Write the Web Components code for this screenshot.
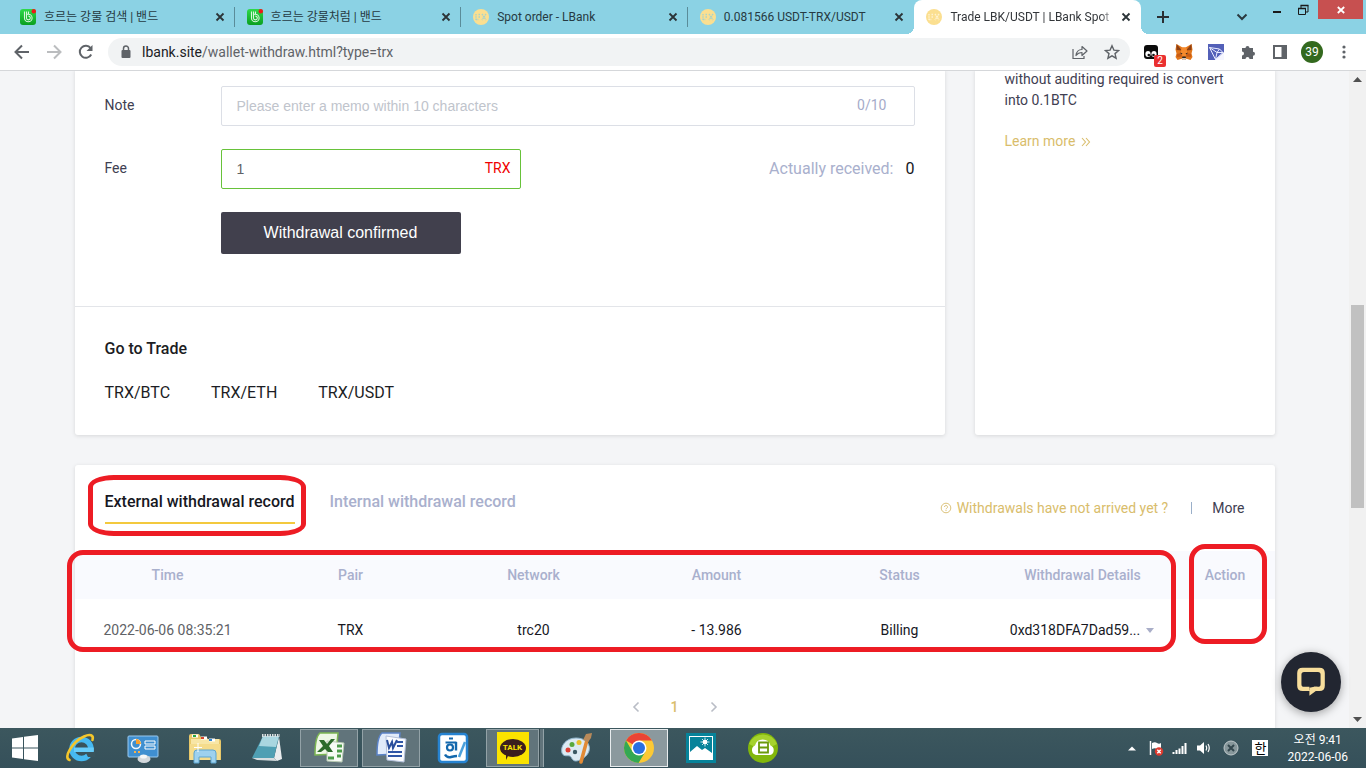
<!DOCTYPE html>
<html lang="en">
<head>
<meta charset="utf-8">
<title>Trade LBK/USDT | LBank Spot Trading</title>
<style>
html, body { margin: 0; height: 100%; }
body { font: 14px/20px Roboto, "Noto Sans CJK KR", sans-serif; overflow: hidden; }
</style>
</head>
<body>
<desktop-screen></desktop-screen>
<script>
const define = (name, html, setup) => {
  const template = document.createElement('template');
  template.innerHTML = html;
  customElements.define(name, class extends HTMLElement {
    constructor() {
      super();
      this.attachShadow({ mode: 'open' }).append(template.content.cloneNode(true));
    }
    connectedCallback() { if (setup) setup(this, this.shadowRoot); }
  });
};

/* ---------- icons ---------- */
const ICONS = {
  band: [16, '<defs><linearGradient id="g" x2="0" y2="1"><stop stop-color="#2fd94a"/><stop offset="1" stop-color="#0a9f1f"/></linearGradient></defs><rect width="16" height="16" rx="3" fill="url(#g)"/><path d="M4.500 2.500V9a3.800 3.800 0 1 0 3.800-3.800H7M6.500 2.500V9a1.900 1.900 0 1 0 1.900-1.900M8.500 2.500V5" fill="none" stroke="#d9f7dc" stroke-width="1.100"/><circle cx="13.800" cy="2.200" r="2.200" fill="#f01818"/>'],
  lbank: [16, '<circle cx="8" cy="8" r="8" fill="#fbdf90"/><path d="M3 5v6M3 10.500h2.500M5.500 5.500h2M5.500 8h2M9 5l4 6M13 5l-4 6" fill="none" stroke="#aad3c9" stroke-width="1.400" stroke-dasharray="1.500 .7"/>'],
  lbanklight: [16, '<circle cx="8" cy="8" r="8" fill="#fbdf90"/><path d="M3 5v6M3 10.500h2.500M5.500 5.500h2M5.500 8h2M9 5l4 6M13 5l-4 6" fill="none" stroke="#fff2cf" stroke-width="1.400" stroke-dasharray="1.500 .7"/>'],
  close: [16, '<path d="M4.500 4.500l7 7M11.500 4.500l-7 7" stroke="#2b3438" stroke-width="1.800"/>'],
  plus: [16, '<path d="M8 2v12M2 8h12" stroke="#2a2f33" stroke-width="2"/>'],
  chevron: [16, '<path d="M3.500 5.500L8 10l4.500-4.500" fill="none" stroke="#2a3a40" stroke-width="2"/>'],
  back: [16, '<path d="M15 8H2M8 1.500L1.500 8 8 14.500" fill="none" stroke="#5f6368" stroke-width="2"/>'],
  forward: [16, '<path d="M1 8h13M8 1.500L14.500 8 8 14.500" fill="none" stroke="#bbbdbf" stroke-width="2"/>'],
  reload: [16, '<path d="M13.200 10.500A6 6 0 1 1 12.600 4.200" fill="none" stroke="#5f6368" stroke-width="2"/><path d="M14.500 1v6h-6z" fill="#5f6368"/>'],
  lock: [16, '<rect x="3.500" y="6" width="9" height="8" rx="1" fill="#5f6368"/><path d="M5.500 6V4.500a2.500 2.500 0 0 1 5 0V6" fill="none" stroke="#5f6368" stroke-width="1.500"/>'],
  share: [16, '<path d="M1 5v9.500h11V12" fill="none" stroke="#5f6368" stroke-width="1.200"/><path d="M4 11.500C4.500 7.500 7 5.500 10 5.500V2.500L15 7l-5 4.500V8.500C7.500 8.500 5.500 9.500 4 11.500z" fill="none" stroke="#5f6368" stroke-width="1.200" stroke-linejoin="round"/>'],
  star: [16, '<path d="M8 1.800l1.900 4.300 4.700.4-3.600 3.100 1.100 4.600L8 11.800l-4.100 2.400L5 9.600 1.400 6.500l4.700-.4z" fill="none" stroke="#5f6368" stroke-width="1.400"/>'],
  octo: [22, '<path d="M3 7q0-3 3-3h8q3 0 3 3v11H6q-3 0-3-3z" fill="#0b0b0b"/><ellipse cx="7" cy="13" rx="2.600" ry="3" fill="#fff"/><ellipse cx="13" cy="13" rx="2.600" ry="3" fill="#fff"/><circle cx="7.800" cy="14" r="1.300" fill="#111"/><circle cx="12.500" cy="14" r="1.300" fill="#111"/>'],
  fox: [18, '<path d="M1.500 1l6 3.500h3l6-3.500 1 5.500-1 4 1 3.500-2 3-4-1.200L10 17H8l-1.500-1.200-4 1.200-2-3 1-3.500-1-4z" fill="#e2761b"/><path d="M1.500 1l5.500 6.500-5.500-.5zM16.500 1L11 7.500l5.500-.5z" fill="#8d3f12"/><path d="M6.500 4.500h5L12.500 12 9 13.500 5.500 12z" fill="#f58a2c"/><path d="M2 11l4-1 1 3.500L2 14zM16 11l-4-1-1 3.500 5 .5z" fill="#c85c16"/><path d="M5 9.500l2.500 1-1 1zM13 9.500l-2.500 1 1 1zM7.500 13.500h3l.5 1.500H7z" fill="#2b2725"/><path d="M6.500 15h5L10 17H8z" fill="#d3c5bb"/>'],
  tron: [16, '<rect width="16" height="16" fill="#5360b8"/><path d="M7 16l9-8v8z" fill="#f5f6ff"/><path d="M1.500 3.500l10 1.500L15 8.500 7.500 15.500z" fill="#5360b8" stroke="#e9ecff"/><path d="M1.500 3.500L9 8.500l-1.500 7M11.500 5L9 8.500h6" fill="none" stroke="#e9ecff"/>'],
  puzzle: [16, '<path d="M2 4h3.500a2 2 0 1 1 4 0H13v3.700a2 2 0 1 1 0 4V15H9.500a2 2 0 0 0-4 0H2v-3.500a2 2 0 0 0 0-4z" fill="#5f6368"/>'],
  panel: [16, '<path d="M2 2h12v12H2z" fill="#fff" stroke="#5f6368" stroke-width="2"/><path d="M9.500 2H14v12H9.500z" fill="#5f6368"/>'],
  dots: [16, '<g fill="#5f6368"><circle cx="8" cy="3" r="1.600"/><circle cx="8" cy="8" r="1.600"/><circle cx="8" cy="13" r="1.600"/></g>'],
  minimize: [16, '<path d="M4 10h8" stroke="#1a1a1a" stroke-width="2"/>'],
  restore: [16, '<path d="M3.500 6.500h7v6h-7zM6 6V3.500h7V10h-2" fill="none" stroke="#1a1a1a"/><path d="M3 6.500h8M5.500 3.500h8" stroke="#1a1a1a" stroke-width="1.500"/>'],
  winclose: [16, '<path d="M4.800 5l6.400 6M11.200 5l-6.400 6" stroke="#fff" stroke-width="1.800"/>'],
  help: [12, '<circle cx="6" cy="6" r="4.800" fill="none" stroke="#dcc27a"/><path d="M4.500 5a1.500 1.500 0 1 1 2.200 1.300Q6 6.600 6 7.300M6 8v1" fill="none" stroke="#dcc27a"/>'],
  raquo: [10, '<path d="M1 1l3.500 4L1 9M5 1l3.500 4L5 9" fill="none" stroke="#d9bd6b" stroke-width="1.100"/>'],
  caret: [10, '<path d="M1 3h8L5 8z" fill="#a9aec8"/>'],
  prev: [14, '<path d="M9.500 2.500L5 7l4.500 4.500" fill="none" stroke="#b9bdc6" stroke-width="1.600"/>'],
  next: [14, '<path d="M4.500 2.500L9 7l-4.500 4.500" fill="none" stroke="#b9bdc6" stroke-width="1.600"/>'],
  chat: [32, '<path d="M8 2.500h16q5 0 5 5v12q0 5-5 5h-3.500L14.500 29v-4.500H8q-5 0-5-5v-12q0-5 5-5z" fill="#f8de9c"/><path d="M9.500 6.500h13q2.500 0 2.500 2.500v9q0 2.500-2.500 2.500H19l-4.500 3.500v-3.500h-5Q7 20.500 7 18V9q0-2.500 2.500-2.500z" fill="#222631"/><path d="M14.500 24.500v-3L19 20.500h3v4z" fill="#f8de9c"/>'],
  up: [9, '<path d="M0 7h9L4.500 2z" fill="#505050"/>'],
  down: [9, '<path d="M0 2h9L4.500 7z" fill="#505050"/>'],
  windows: [28, '<path d="M1 4.500l11-1.500v10.500H1zM13 2.800L27 1v12.500H13zM1 14.500h11V25L1 23.500zM13 14.500h14V27l-14-1.800z" fill="#fff"/>'],
  ie: [32, '<circle cx="16.500" cy="17" r="9.500" fill="none" stroke="#46b9f1" stroke-width="5.500"/><path d="M20 19.500h10V25h-7z" fill="#3a545c"/><path d="M9 15.500h19.800v4.500H9z" fill="#68cdfa"/><path d="M4.500 28C-2 26 7 10 19 4.500c6-2.800 10-1.500 8.500 3.500" fill="none" stroke="#f4c62b" stroke-width="2.600" stroke-linecap="round"/>'],
  control: [32, '<rect x="1" y="4" width="30" height="21" rx="1" fill="#3f8fd0" stroke="#9ac9ee"/><circle cx="9" cy="12" r="4.500" fill="none" stroke="#f1f7fc" stroke-width="1.500"/><path d="M9 12V7a5 5 0 0 1 5 5z" fill="#f8a12f"/><path d="M18 9h10v3H18zM18 14h10v3H18z" fill="none" stroke="#fff"/><path d="M7 20h2M11 20h2" stroke="#f8b24c" stroke-width="2"/><ellipse cx="17" cy="27" rx="6.500" ry="4" fill="#d3d8dc"/><ellipse cx="16.500" cy="24.500" rx="3.500" ry="2" fill="#f4f6f7"/>'],
  explorer: [32, '<path d="M0 4q0-2 2-2h8l2 3h5l2 2h11q2 0 2 2v19H0z" fill="#e8c869"/><path d="M2 7h28v20H2z" fill="#f8e6a6"/><path d="M3 4h6M12 6h6M20 8h6" stroke="#fff" stroke-width="3"/><path d="M4 4h3" stroke="#28a745" stroke-width="2"/><path d="M12 6h3" stroke="#d5462d" stroke-width="2"/><path d="M20 8h3" stroke="#2f86d6" stroke-width="2"/><path d="M1 12h30v16H1z" fill="#f5dc8c"/><path d="M5 31V21q0-3 3-3h16q3 0 3 3v10h-5v-6H10v6z" fill="#9ed1ee" stroke="#5da5d1"/><path d="M9 11v9M5 15.500h8" stroke="#fff"/>'],
  notepad: [32, '<path d="M28 5l3 22-5 2-3-3z" fill="#e9ecee"/><path d="M12 4h16l-5 22H1z" fill="#4f9fb3"/><path d="M12 4h16l-3 11-17-1z" fill="#a9d6e0"/><path d="M1 26h22l3 3-20-1z" fill="#d5dcdf"/><path d="M11 3.500h18" stroke="#dadfe1" stroke-width="3" stroke-dasharray="1.500 1"/>'],
  excel: [32, '<path d="M7 1h18l-2 21-21 1q0-18 5-22z" fill="#eef7e6" stroke="#7cb653" stroke-width="1.500"/><path d="M14 9l17 2-2 19-15-1z" fill="#f7fbf5" stroke="#b7c9b2"/><path d="M6 8h5l3 4 4-5h4l-6 7 4 6h-5l-3-3-4 3H4l6-6z" fill="#2c6b2a"/><path d="M24 14h5M24 19h5M24 24h4M15 26h6" stroke="#4d9c4a" stroke-width="3"/>'],
  word: [32, '<path d="M7 1h18l-2 21-21 1q0-18 5-22z" fill="#e1ebfa" stroke="#5b83c8" stroke-width="1.500"/><path d="M11 4l20 3-2 23-17-2z" fill="#fafcff" stroke="#b3c0da"/><path d="M12 8l2 8 3-6 1 6 4-8" fill="none" stroke="#2a4f9c" stroke-width="2"/><path d="M22 10h6M22 14h6M13 20h14M13 24h14" stroke="#2e55a6" stroke-width="2"/>'],
  hangul: [32, '<rect x="2" y="2" width="28" height="28" rx="3" fill="#fff" stroke="#2683d1" stroke-width="2.500"/><path d="M12 6.500h4M8.500 10.500h11" stroke="#1368ad" stroke-width="2.200"/><circle cx="13" cy="15.500" r="3" fill="none" stroke="#1368ad" stroke-width="2.200"/><path d="M19 10v8.500M8 22.500q2 3.500 6 2.500t6-1" fill="none" stroke="#1368ad" stroke-width="2.400"/><path d="M28 10l-6 15" stroke="#4ba0db" stroke-width="2.500"/>'],
  paint: [32, '<path d="M15 6C5 6-1 14 1 21c2 5 7 1 9 4 2 4 4 5 9 3 9-4 12-12 7-18-3-3-7-4-11-4z" fill="#dceaf3" stroke="#91b6ce"/><circle cx="7" cy="18" r="2.500" fill="#dd4036"/><circle cx="11" cy="12.500" r="2.500" fill="#59a93d"/><circle cx="18" cy="10.500" r="2.500" fill="#eabf2a"/><circle cx="14" cy="20" r="2.200" fill="#3b5964"/><path d="M26 8l-6 22" stroke="#e28a35" stroke-width="3.500" stroke-linecap="round"/><path d="M22 8l3-6 6-1-1 5-3 4z" fill="#b98a5a"/>'],
  chrome: [32, '<circle cx="16" cy="16" r="15" fill="#fcc934"/><path d="M16 16L3 8.500A15 15 0 0 1 29 8.500H16z" fill="#ea4335"/><path d="M3 8.500A15 15 0 0 0 15.500 31L22.500 19.500 9.500 19.800z" fill="#34a853"/><circle cx="16" cy="16" r="7.500" fill="#fff"/><circle cx="16" cy="16" r="6" fill="#2a6fe0"/>'],
  photos: [32, '<path d="M1 1h30v30H1z" fill="#07839a"/><path d="M4 4h24v24H4z" fill="#fff"/><path d="M5 5h22v17H5z" fill="#07839a"/><path d="M5 22v-2l7-6 5 4 3-2 7 5v1z" fill="#fff"/><circle cx="20" cy="10" r="2.300" fill="#fff"/><path d="M20 5.500v9M15.500 10h9M17 7l6 6M23 7l-6 6" stroke="#fff" stroke-width=".8"/>'],
  cloud: [32, '<circle cx="16" cy="16" r="15" fill="#82b70b"/><path d="M2 12a15 15 0 0 1 28 0Q16 20 2 12z" fill="#a5d22d"/><path d="M9 23a5 5 0 0 1-1-9.500 8 8 0 0 1 15.500 0A5 5 0 0 1 23 23z" fill="#fff"/><path d="M12 10.500h9v10h-9zM12 15.500h9" fill="none" stroke="#6b9a0b" stroke-width="1.800"/>'],
  trayup: [16, '<path d="M4 10.500h8L8 6.500z" fill="#fff"/>'],
  flag: [16, '<path d="M2.500 1v14" stroke="#fff" stroke-width="1.500"/><path d="M4 3q3-1.500 5 0t4 0v6q-2 1.500-4 0t-5 0z" fill="#fff"/><circle cx="11" cy="11.500" r="4.200" fill="#df3a2e"/><path d="M9.300 9.800l3.400 3.400M12.700 9.800l-3.400 3.400" stroke="#fff" stroke-width="1.400"/>'],
  signal: [16, '<path d="M1.500 14v-2M4.500 14v-4M7.500 14V8.500M10.500 14V6M13.500 14V3" stroke="#fff" stroke-width="2"/>'],
  speaker: [16, '<path d="M1 5.500h3L8 2v12l-4-3.500H1z" fill="#fff"/><path d="M10 5.500q1.500 2.500 0 5M12 4q2.500 4 0 8" fill="none" stroke="#fff" stroke-width="1.200"/>'],
  xcircle: [16, '<circle cx="8" cy="8" r="7" fill="#87979b" stroke="#c1cacc"/><path d="M5 5l6 6M11 5l-6 6" stroke="#33474e" stroke-width="2"/>'],
};
define('ui-icon', '<style>:host{display:inline-flex;flex:none}svg{display:block}</style><span></span>', (el, root) => {
  const [box, body] = ICONS[el.getAttribute('name')];
  const size = el.getAttribute('size') || box;
  root.querySelector('span').innerHTML = `<svg width="${size}" height="${size}" viewBox="0 0 ${box} ${box}" aria-hidden="true">${body}</svg>`;
});

/* ---------- browser chrome ---------- */
define('browser-tab', `<style>
:host{display:flex;flex:1 1 0;min-width:0;height:34px;box-sizing:border-box;align-items:center;gap:8px;padding:0 7px 0 12px;position:relative;color:#263a42;font:12px/16px Roboto,"Noto Sans CJK KR",sans-serif}
:host([divider]){background:linear-gradient(#5a8c99,#5a8c99) right center/1px 20px no-repeat}
:host([active]){background:#fff;border-radius:8px 8px 0 0;color:#33363a}
:host([active])::before,:host([active])::after{content:"";position:absolute;bottom:0;width:8px;height:8px;background:radial-gradient(circle at 0 0,transparent 8px,#fff 8px)}
:host([active])::before{left:-8px}
:host([active])::after{right:-8px;background:radial-gradient(circle at 100% 0,transparent 8px,#fff 8px)}
.icon{display:flex}
.t{flex:1;min-width:0;white-space:nowrap}
:host([active]) .t{-webkit-mask:linear-gradient(90deg,#000 150px,transparent 166px)}
button{border:0;padding:0;background:none;display:flex}
</style><span class="icon"></span><span class="t"><slot></slot></span><button aria-label="Close tab"><ui-icon name="close"></ui-icon></button>`,
(el, root) => {
  root.querySelector('.icon').innerHTML = `<ui-icon name="${el.getAttribute('icon')}"></ui-icon>`;
});

define('browser-tabs', `<style>
:host{display:flex;height:34px;background:#8bd2e4;padding-left:8px;padding-right:3px}
nav{display:flex;flex:0 1 1133px;min-width:0}
.space{flex:1}
button{border:0;padding:0;background:none;display:flex;align-items:center;justify-content:center}
.new{width:44px}
.win{display:flex;align-items:flex-start}
.win button{width:26px;height:19px}
.win .search{width:44px;height:34px}
.win .x{width:45px;background:#c75050;margin-left:2px}
</style><nav aria-label="Tabs">
<browser-tab icon="band" divider>흐르는 강물 검색 | 밴드</browser-tab>
<browser-tab icon="band" divider>흐르는 강물처럼 | 밴드</browser-tab>
<browser-tab icon="lbank" divider>Spot order - LBank</browser-tab>
<browser-tab icon="lbank">0.081566 USDT-TRX/USDT</browser-tab>
<browser-tab icon="lbanklight" active>Trade LBK/USDT | LBank Spot T</browser-tab>
</nav><button class="new" aria-label="New tab"><ui-icon name="plus"></ui-icon></button><span class="space"></span>
<div class="win"><button class="search" aria-label="Search tabs"><ui-icon name="chevron"></ui-icon></button><button aria-label="Minimize"><ui-icon name="minimize"></ui-icon></button><button aria-label="Restore"><ui-icon name="restore"></ui-icon></button><button class="x" aria-label="Close"><ui-icon name="winclose"></ui-icon></button></div>`);

define('browser-toolbar', `<style>
:host{display:flex;align-items:center;height:36px;padding:0 6px;background:#fff;border-bottom:1px solid #d5d7da}
button{border:0;padding:0;background:none;width:32px;height:32px;display:flex;align-items:center;justify-content:center;position:relative;flex:none}
.bar{flex:1;min-width:0;display:flex;align-items:center;height:28px;margin:0 6px;padding-left:10px;padding-right:2px;border-radius:14px;background:#f1f3f4}
.url{flex:1;min-width:0;padding-left:8px;font:14px/20px Roboto,sans-serif;color:#5f6368;white-space:nowrap}
.url b{font-weight:400;color:#202124}
.badge{position:absolute;right:2px;bottom:1px;width:12px;height:12px;border-radius:2px;background:#ea3030;color:#fff;font:10px/12px Roboto,sans-serif;text-align:center}
.me{width:22px;height:22px;border-radius:11px;background:#33691e;color:#fff;font:12px/22px Roboto,sans-serif}
</style>
<button aria-label="Back"><ui-icon name="back"></ui-icon></button><button aria-label="Forward"><ui-icon name="forward"></ui-icon></button><button aria-label="Reload"><ui-icon name="reload"></ui-icon></button>
<div class="bar"><ui-icon name="lock"></ui-icon><span class="url"><b>lbank.site</b>/wallet-withdraw.html?type=trx</span><button aria-label="Share"><ui-icon name="share"></ui-icon></button><button aria-label="Bookmark"><ui-icon name="star"></ui-icon></button></div>
<button aria-label="Extension"><ui-icon name="octo"></ui-icon><span class="badge">2</span></button><button aria-label="Wallet"><ui-icon name="fox"></ui-icon></button><button aria-label="TronLink"><ui-icon name="tron"></ui-icon></button><button aria-label="Extensions"><ui-icon name="puzzle"></ui-icon></button><button aria-label="Side panel"><ui-icon name="panel"></ui-icon></button><button aria-label="Profile"><span class="me">39</span></button><button aria-label="Menu"><ui-icon name="dots"></ui-icon></button>`);

/* ---------- page ---------- */
define('withdraw-form', `<style>
:host{display:block;padding:17px 30px 52px;border-bottom:1px solid #e3e5e9}
form{display:flex;flex-direction:column;gap:23px}
.row{display:grid;grid-template-columns:116px 1fr;align-items:center}
label{color:#3f4052;line-height:20px;padding-bottom:2px}
.field{display:flex;align-items:center;box-sizing:border-box;height:40px;border:1px solid #dcdfe6;border-radius:2px;padding:0 27px 0 15px}
input{flex:1;min-width:0;width:0;border:0;padding:0;outline:0;background:none;font:14px/20px "Liberation Sans",Arial,sans-serif;color:#606266}
input::placeholder{color:#c0c4cc}
.count{color:#a5abc9;padding-bottom:2px}
.line{display:flex;justify-content:space-between;align-items:center}
.fee{width:300px;border-color:#67c23a;padding-right:9px}
.unit{color:#f00000;padding-bottom:2px}
.got{font-size:16px;color:#a9b0cd;display:flex;gap:12px}
.got b{font-weight:400;color:#17181f}
button{justify-self:start;width:240px;height:42px;border:0;border-radius:2px;background:#41404d;color:#fff;font:16px/20px "Liberation Sans",Arial,sans-serif;grid-column:2}
</style><form>
<div class="row"><label for="note">Note</label><div class="field"><input id="note" placeholder="Please enter a memo within 10 characters"><span class="count">0/10</span></div></div>
<div class="row"><label for="fee">Fee</label><div class="line"><div class="field fee"><input id="fee" value="1"><span class="unit">TRX</span></div><div class="got"><span>Actually received:</span><b>0</b></div></div></div>
<div class="row"><button type="button">Withdrawal confirmed</button></div>
</form>`);

define('trade-links', `<style>
:host{display:block;padding:30px;font-size:16px;line-height:24px;color:#1c1d24}
h2{margin:0 0 20px;font-size:16px;font-weight:500;line-height:24px}
nav{display:flex;gap:41px}
a{color:inherit;text-decoration:none}
</style><h2>Go to Trade</h2><nav><a href="#btc">TRX/BTC</a><a href="#eth">TRX/ETH</a><a href="#usdt">TRX/USDT</a></nav>`);

define('limit-note', `<style>
:host{display:block;padding:0 30px;color:#3f4052;line-height:21px}
p{margin:0 0 20px}
a{color:#d9bd6b;text-decoration:none;display:flex;align-items:center;gap:6px}
</style><p>without auditing required is convert into 0.1BTC</p><a href="#limits">Learn more<ui-icon name="raquo"></ui-icon></a>`);

define('ui-card', `<style>
:host{display:block;background:#fff;border-radius:3px;box-shadow:0 1px 4px rgba(0,0,0,.12)}
</style><slot></slot>`);

define('ink-mark', `<style>
:host{position:absolute;box-sizing:border-box;border:5px solid #ed1c24;border-radius:16px;pointer-events:none}
</style>`);

define('withdrawal-records', `<style>
:host{display:block;position:relative}
header{display:flex;justify-content:space-between;padding:0 30px;height:86px;box-sizing:border-box}
.tabs{display:flex;gap:35px;align-items:flex-start;padding-top:24px}
.tabs button{border:0;background:none;padding:0 0 8px;font:500 16px/25px Roboto,sans-serif;color:#a9b0cd;border-bottom:2px solid transparent}
.tabs .on{color:#17181f;border-color:#f3c93e}
.links{display:flex;align-items:center;height:20px;padding-top:33px;color:#d9bd6b}
.links a{color:inherit;text-decoration:none;display:flex;align-items:center;gap:5px}
.links i{width:1px;height:12px;margin:0 20px 0 23px;background:#9aafc9}
.links .more{color:#3f4052}
table{width:100%;table-layout:fixed;border-collapse:collapse;text-align:center}
th,td{padding:0 0 0 3px;font-size:14px;line-height:20px}
th{height:48px;background:#f9fafe;color:#a9b0cd;font-weight:500}
th:last-child{width:99px}
td{height:62px;color:#17181f}
td:first-child{color:#606266}
.hash{display:inline-flex;align-items:center;gap:5px;border:0;background:none;padding:0;font:inherit;color:inherit}
nav{display:flex;justify-content:center;align-items:center;gap:23px;padding:36px 0 40px}
nav button{border:0;background:none;padding:0;width:16px;height:20px;display:flex;align-items:center;justify-content:center;color:#d9bd6b;font:500 14px/20px Roboto,sans-serif}
.m1{left:13px;top:10px;width:218px;height:61px;border-radius:26px/12px}
.m2{left:-8px;top:85px;right:99px;height:102px}
.m3{right:8px;top:79px;width:78px;height:100px}
</style>
<header><div class="tabs"><button class="on">External withdrawal record</button><button>Internal withdrawal record</button></div>
<div class="links"><a href="#help"><ui-icon name="help"></ui-icon>Withdrawals have not arrived yet ?</a><i></i><a class="more" href="#more">More</a></div></header>
<table><thead><tr><th>Time</th><th>Pair</th><th>Network</th><th>Amount</th><th>Status</th><th>Withdrawal Details</th><th>Action</th></tr></thead>
<tbody><tr><td>2022-06-06 08:35:21</td><td>TRX</td><td>trc20</td><td>- 13.986</td><td>Billing</td><td><button class="hash">0xd318DFA7Dad59...<ui-icon name="caret"></ui-icon></button></td><td></td></tr></tbody></table>
<nav aria-label="Pages"><button aria-label="Previous"><ui-icon name="prev"></ui-icon></button><button>1</button><button aria-label="Next"><ui-icon name="next"></ui-icon></button></nav>
<ink-mark class="m1"></ink-mark><ink-mark class="m2"></ink-mark><ink-mark class="m3"></ink-mark>`);

define('page-scrollbar', `<style>
:host{display:flex;flex-direction:column;align-items:center;width:17px;flex:none;background:#f1f1f1}
span{display:flex;height:17px;align-items:center}
.track{flex:1;width:13px;display:grid;grid-template-rows:217fr 203fr 203fr}
.thumb{grid-row:2;background:#c1c1c1}
</style><span><ui-icon name="up"></ui-icon></span><div class="track"><div class="thumb"></div></div><span><ui-icon name="down"></ui-icon></span>`);

define('wallet-page', `<style>
:host{display:flex;flex:1;min-height:0;position:relative;background:#f4f5f7}
main{flex:1;min-width:0;overflow:hidden}
.wrap{max-width:1200px;margin:-2px auto 0}
.top{display:grid;grid-template-columns:1fr 300px;gap:30px;margin-bottom:30px}
.chat{position:absolute;right:25px;bottom:16px;width:60px;height:60px;border:0;border-radius:30px;padding:0;background:#222631;display:flex;align-items:center;justify-content:center;box-shadow:0 2px 10px rgba(0,0,0,.35)}
</style><main><div class="wrap"><div class="top"><ui-card><withdraw-form></withdraw-form><trade-links></trade-links></ui-card><ui-card><limit-note></limit-note></ui-card></div>
<ui-card><withdrawal-records></withdrawal-records></ui-card></div></main>
<page-scrollbar></page-scrollbar><button class="chat" aria-label="Chat"><ui-icon name="chat" size="34"></ui-icon></button>`);

/* ---------- taskbar ---------- */
define('task-item', `<style>
:host{display:flex}
button{width:58px;height:38px;box-sizing:border-box;border:1px solid transparent;background:none;padding:0;display:flex;align-items:center;justify-content:center}
:host([open]) button{background:#61747b;border-color:#93a2a7}
:host([focus]) button{background:#8b999e;border-color:#e8ecee}
:host([stack]) button{width:53px;margin-right:5px;box-shadow:1px 0 #35474d,4px 0 #61747b,5px 0 #93a2a7}
</style><button><slot></slot></button>`, (el, root) => {
  root.querySelector('button').setAttribute('aria-label', el.getAttribute('label'));
});
define('talk-logo', `<style>
:host{display:flex;width:32px;height:32px;background:#fbe300;align-items:center;justify-content:center;position:relative}
span{width:26px;height:18px;border-radius:13px/9px;background:#3b1e1e;color:#fbe300;font:bold 8px/18px Roboto,sans-serif;text-align:center}
span::after{content:"";position:absolute;left:9px;top:22px;border:3px solid transparent;border-top:6px solid #3b1e1e;border-left-width:0}
</style><span>TALK</span>`);
define('win-taskbar', `<style>
:host{display:flex;align-items:center;height:40px;flex:none;background:linear-gradient(#3c575e,#35505a)}
.start{width:50px;height:40px;margin-right:2px;border:0;padding:0;background:none;display:flex;align-items:center;justify-content:center}
.apps{display:flex;gap:4px;flex:1}
.tray{display:flex;align-items:center;padding-right:18px;color:#fff;font-family:Roboto,"Noto Sans CJK KR",sans-serif}
.tray ui-icon{margin-left:8px}
.tray .wide{margin-left:11px}
.ime{width:16px;height:16px;margin:0 19px 0 13px;background:#fff;color:#000;font:13px/16px "Noto Sans CJK KR",sans-serif;text-align:center}
time{display:block;font-size:12px;line-height:17px;text-align:center;white-space:nowrap;padding-top:2px}
</style><button class="start" aria-label="Start"><ui-icon name="windows"></ui-icon></button><div class="apps">
<task-item label="Internet Explorer"><ui-icon name="ie"></ui-icon></task-item>
<task-item label="Control Panel"><ui-icon name="control"></ui-icon></task-item>
<task-item label="File Explorer"><ui-icon name="explorer"></ui-icon></task-item>
<task-item label="Notepad"><ui-icon name="notepad"></ui-icon></task-item>
<task-item label="Excel" open><ui-icon name="excel"></ui-icon></task-item>
<task-item label="Word" open><ui-icon name="word"></ui-icon></task-item>
<task-item label="Hangul"><ui-icon name="hangul"></ui-icon></task-item>
<task-item label="KakaoTalk" open stack><talk-logo></talk-logo></task-item>
<task-item label="Paint"><ui-icon name="paint"></ui-icon></task-item>
<task-item label="Chrome" focus><ui-icon name="chrome"></ui-icon></task-item>
<task-item label="Photos"><ui-icon name="photos"></ui-icon></task-item>
<task-item label="Cloud"><ui-icon name="cloud"></ui-icon></task-item>
</div><div class="tray"><ui-icon name="trayup"></ui-icon><ui-icon name="flag"></ui-icon><ui-icon name="signal"></ui-icon><ui-icon name="speaker"></ui-icon><ui-icon class="wide" name="xcircle"></ui-icon><span class="ime">한</span><time><div>오전 9:41</div><div>2022-06-06</div></time></div>`);

define('desktop-screen', `<style>
:host{display:flex;flex-direction:column;height:100vh;overflow:hidden}
</style><browser-tabs></browser-tabs><browser-toolbar></browser-toolbar><wallet-page></wallet-page><win-taskbar></win-taskbar>`);
</script>
</body>
</html>
